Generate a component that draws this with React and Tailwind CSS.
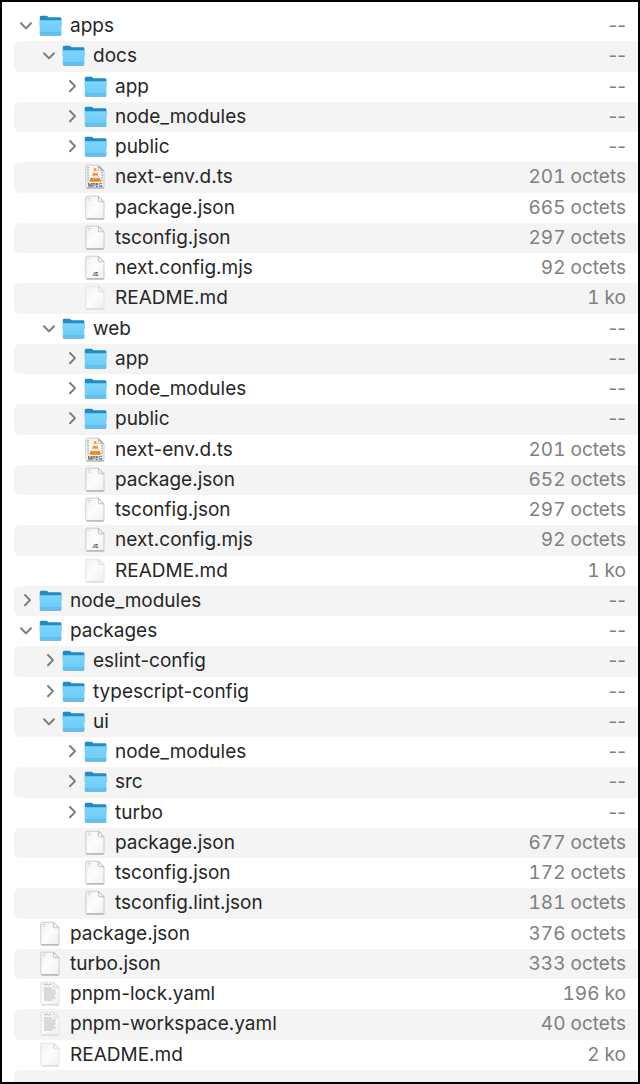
import { useState } from 'react';
import clsx from 'clsx';

const TREE = [
  { name: 'apps', children: [
    { name: 'docs', children: [
      { name: 'app', children: [] },
      { name: 'node_modules', children: [] },
      { name: 'public', children: [] },
      { name: 'next-env.d.ts', icon: 'video', size: '201 octets' },
      { name: 'package.json', icon: 'json', size: '665 octets' },
      { name: 'tsconfig.json', icon: 'json', size: '297 octets' },
      { name: 'next.config.mjs', icon: 'js', size: '92 octets' },
      { name: 'README.md', icon: 'blank', size: '1 ko' },
    ] },
    { name: 'web', children: [
      { name: 'app', children: [] },
      { name: 'node_modules', children: [] },
      { name: 'public', children: [] },
      { name: 'next-env.d.ts', icon: 'video', size: '201 octets' },
      { name: 'package.json', icon: 'json', size: '652 octets' },
      { name: 'tsconfig.json', icon: 'json', size: '297 octets' },
      { name: 'next.config.mjs', icon: 'js', size: '92 octets' },
      { name: 'README.md', icon: 'blank', size: '1 ko' },
    ] },
  ] },
  { name: 'node_modules', children: [] },
  { name: 'packages', children: [
    { name: 'eslint-config', children: [] },
    { name: 'typescript-config', children: [] },
    { name: 'ui', children: [
      { name: 'node_modules', children: [] },
      { name: 'src', children: [] },
      { name: 'turbo', children: [] },
      { name: 'package.json', icon: 'json', size: '677 octets' },
      { name: 'tsconfig.json', icon: 'json', size: '172 octets' },
      { name: 'tsconfig.lint.json', icon: 'json', size: '181 octets' },
    ] },
  ] },
  { name: 'package.json', icon: 'json', size: '376 octets' },
  { name: 'turbo.json', icon: 'json', size: '333 octets' },
  { name: 'pnpm-lock.yaml', icon: 'text', size: '196 ko' },
  { name: 'pnpm-workspace.yaml', icon: 'text', size: '40 octets' },
  { name: 'README.md', icon: 'blank', size: '2 ko' },
];

const INDENT = ['pl-[5px]', 'pl-[28px]', 'pl-[50px]'];

// Depth-first list of the rows that are visible with the given open folders
function flatten(nodes, open, depth = 0, parent = '') {
  return nodes.flatMap((node) => {
    const path = `${parent}/${node.name}`;
    const row = { ...node, path, depth };
    return node.children && open.includes(path)
      ? [row, ...flatten(node.children, open, depth + 1, path)]
      : [row];
  });
}

function Chevron({ open }) {
  return (
    <svg viewBox="0 0 16 16" className="w-4 h-4" fill="none" stroke="#7d7d7d" strokeWidth="2" strokeLinecap="round" strokeLinejoin="round">
      <path d={open ? 'M2 5.2 7 10.4 12 5.2' : 'M6 2 11 7.1 6 12.2'} />
    </svg>
  );
}

function FolderIcon() {
  return (
    <svg viewBox="0 0 24 24" className="w-6 h-6">
      <defs>
        <linearGradient id="folder-front" x1="0" y1="0" x2="0" y2="1">
          <stop offset="0" stopColor="#7fd5fb" />
          <stop offset="1" stopColor="#68caf8" />
        </linearGradient>
      </defs>
      <path d="M.8 3.2Q.8 1.8 2.3 1.8H7.3Q8.2 1.8 8.8 2.5L9.5 3.2H21Q22.4 3.2 22.4 4.6V12H.8Z" fill="#1f8cc6" />
      <path d="M.8 6.3H22.4V20.2Q22.4 21.4 21.2 21.4H2Q.8 21.4.8 20.2Z" fill="url(#folder-front)" />
      <path d="M.8 18.9H22.4" stroke="#4fb0e0" strokeWidth=".8" />
      <path d="M1.2 21.2H22" stroke="#4f9cc4" strokeWidth=".8" />
    </svg>
  );
}

function FileIcon({ type }) {
  const soft = type === 'blank' || type === 'text';
  return (
    <svg viewBox="0 0 24 26" className="w-6 h-[26px]">
      <defs>
        <linearGradient id="page" x1="0" y1="0" x2="1" y2="1">
          <stop offset="0" stopColor="#f1f1f1" />
          <stop offset=".5" stopColor="#fdfdfd" />
          <stop offset="1" stopColor="#eeeeee" />
        </linearGradient>
      </defs>
      <path d="M2.8 1.2H14.4L20 6.8V23.8H2.8Q1.8 23.8 1.8 22.8V2.2Q1.8 1.2 2.8 1.2Z" fill="url(#page)" stroke={soft ? '#e2e2e2' : '#c6c6c6'} strokeWidth=".9" />
      <path d="M2.6 24H19.6" stroke={soft ? '#d3d3d3' : '#989898'} strokeWidth=".9" />
      <path d="M14.4 1.2V5.8Q14.4 6.8 15.4 6.8H20Z" fill="#f3f3f3" stroke={soft ? '#d6d6d6' : '#b8b8b8'} strokeWidth=".9" />
      {type === 'json' && <path d="M3.8 3.4H6.8M3.8 5.2H5.8" stroke="#cccccc" strokeWidth=".8" />}
      {type === 'js' && (
        <>
          <path d="M3.8 3.4H6" stroke="#d3d3d3" strokeWidth=".8" />
          <text x="11.3" y="20.8" textAnchor="middle" fontSize="5" fontWeight="700" fill="#555">JS</text>
        </>
      )}
      {type === 'text' && (
        <>
          <path d="M5.1 2.8 6.6 4.2 8.1 2.8 9.6 4.2 11.1 2.8 12.6 4.2" fill="none" stroke="#999" strokeWidth=".8" />
          <path d="M5 7H13M5 9H16.5M5 11H16.5M5 13H16.5M5 15H15.5M5 17H16.5M5 19H13.5" stroke="#b3b3b3" strokeWidth=".9" />
        </>
      )}
      {type === 'video' && (
        <>
          <path d="M4 3V18.5M18 8V18.5" stroke="#6d6d6d" strokeWidth="1" strokeDasharray="1.2 1.3" />
          <path d="M14.6 2.4 18.8 6.6" stroke="#777" strokeWidth="1" />
          <path d="M6.8 13.8H15.6L17.2 17.8H5.2Z" fill="#e8841f" />
          <path d="M10.2 4.2H12.2L15.2 15.2Q11.2 17 7.2 15.2Z" fill="#f18b22" />
          <path d="M9.6 6.5H12.8L13.6 9.2H8.8ZM8.2 11.5H14.2L14.9 13.7Q11.2 15 7.6 13.7Z" fill="#eeeae5" />
          <text x="11" y="22.8" textAnchor="middle" fontSize="5" fontWeight="600" fill="#444">MPEG</text>
        </>
      )}
    </svg>
  );
}

function Row({ row, open, striped, onToggle }) {
  const isFolder = Boolean(row.children);

  return (
    <tr className={clsx('h-[30px]', striped && 'bg-[#f4f4f4]')}>
      <td className="p-0 rounded-l-md">
        <div className={clsx('flex items-center', INDENT[row.depth])}>
          {isFolder ? (
            <button
              type="button"
              aria-expanded={open}
              aria-label={row.name}
              onClick={() => onToggle(row.path)}
              className="w-4 h-4 mr-1 shrink-0 cursor-pointer"
            >
              <Chevron open={open} />
            </button>
          ) : (
            <span className="w-4 mr-1 shrink-0" />
          )}
          <span className="w-6 mr-[7px] shrink-0" aria-hidden="true">
            {isFolder ? <FolderIcon /> : <FileIcon type={row.icon} />}
          </span>
          <span className="whitespace-nowrap text-[#262626]">{row.name}</span>
        </div>
      </td>
      <td className={clsx('p-0 pr-3 text-right whitespace-nowrap text-[#808080]', row.size && 'tabular-nums')}>
        {row.size || '--'}
      </td>
    </tr>
  );
}

export default function App() {
  const [open, setOpen] = useState(['/apps', '/apps/docs', '/apps/web', '/packages', '/packages/ui']);
  const rows = flatten(TREE, open);

  const toggle = (path) =>
    setOpen((prev) => (prev.includes(path) ? prev.filter((p) => p !== path) : [...prev, path]));

  return (
    <main className="min-h-screen grid grid-rows-[1fr_auto] border-2 border-black bg-white pl-3 pt-[9px] font-['Inter','Liberation_Sans',sans-serif] text-[19px] leading-6">
      <table className="w-full border-separate border-spacing-0" aria-label="Files">
        <tbody>
          {rows.map((row, i) => (
            <Row
              key={row.path}
              row={row}
              open={open.includes(row.path)}
              striped={i % 2 === 1}
              onToggle={toggle}
            />
          ))}
        </tbody>
      </table>
      <div className="h-3 rounded-tl-md bg-[#f4f4f4]" />
    </main>
  );
}
